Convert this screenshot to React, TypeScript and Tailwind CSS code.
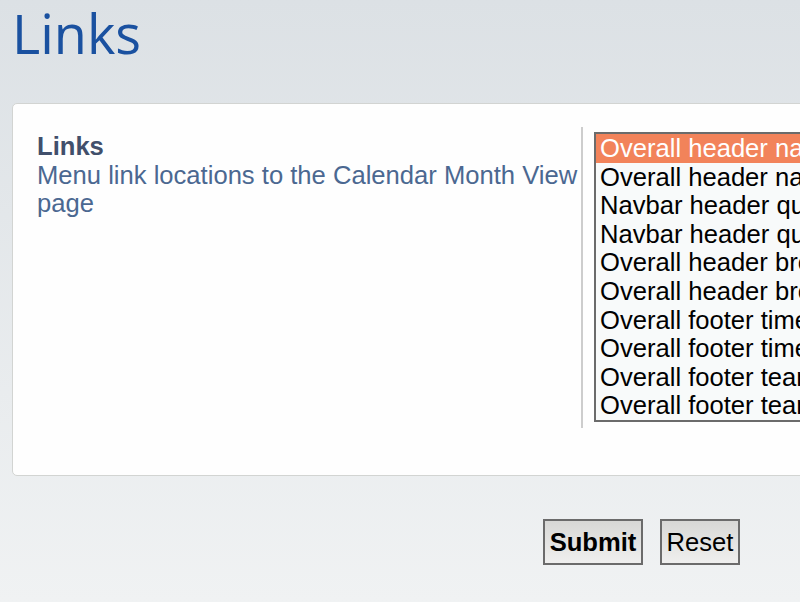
import React from 'react';

const options = [
  'Overall header navbar left',
  'Overall header navbar right',
  'Navbar header quick links left',
  'Navbar header quick links right',
  'Overall header breadcrumbs left',
  'Overall header breadcrumbs right',
  'Overall footer timezone left',
  'Overall footer timezone right',
  'Overall footer team links left',
  'Overall footer team links right',
];

export default function App() {
  return (
    <div
      className="w-[800px] h-[602px] overflow-hidden bg-gradient-to-b from-[#dce1e5] to-[#f0f2f3]"
      style={{ fontFamily: '"Liberation Sans", Arial, sans-serif' }}
    >
      <div className="h-[103px] pl-[12px] pt-[3px]">
        <h1
          className="text-[54px] leading-[60px] text-[#1a51a0]"
          style={{ fontFamily: '"Open Sans", "Noto Sans", sans-serif' }}
        >
          Links
        </h1>
      </div>

      <div className="ml-[12px] w-[1000px] h-[373px] bg-[#fefefe] border border-[#d2d4d2] rounded-[5px] pt-[23px]">
        <div className="flex items-start">
          <div className="w-[568px] shrink-0 pl-[24px] pt-[5px] text-[25.6px] leading-[28.6px]">
            <div className="font-bold text-[#414f6b]">Links</div>
            <div className="text-[#4b6891]">
              Menu link locations to the Calendar Month View page
            </div>
          </div>
          <div className="w-[2px] h-[301px] shrink-0 bg-[#cdcdcd]" />
          <div className="ml-[11px] mt-[5px] w-[360px] shrink-0 border-2 border-[#6b6b6b] bg-[#f8fafa]">
            {options.map((o, i) => (
              <div
                key={o}
                className={
                  'h-[28.6px] pl-[4px] text-[25.6px] leading-[28.6px] whitespace-nowrap ' +
                  (i === 0 ? 'bg-[#f2835a] text-white' : 'text-black')
                }
              >
                {o}
              </div>
            ))}
          </div>
        </div>
      </div>

      <div className="flex justify-end gap-[17px] pr-[60px] pt-[43px]">
        <button className="w-[100px] h-[46px] border-2 border-[#6b6b6b] bg-gradient-to-b from-[#d8d8d6] to-[#efefee] text-[25.6px] font-bold text-black">
          Submit
        </button>
        <button className="w-[80px] h-[46px] border-2 border-[#6b6b6b] bg-gradient-to-b from-[#d8d8d6] to-[#efefee] text-[25.6px] text-black">
          Reset
        </button>
      </div>
    </div>
  );
}
